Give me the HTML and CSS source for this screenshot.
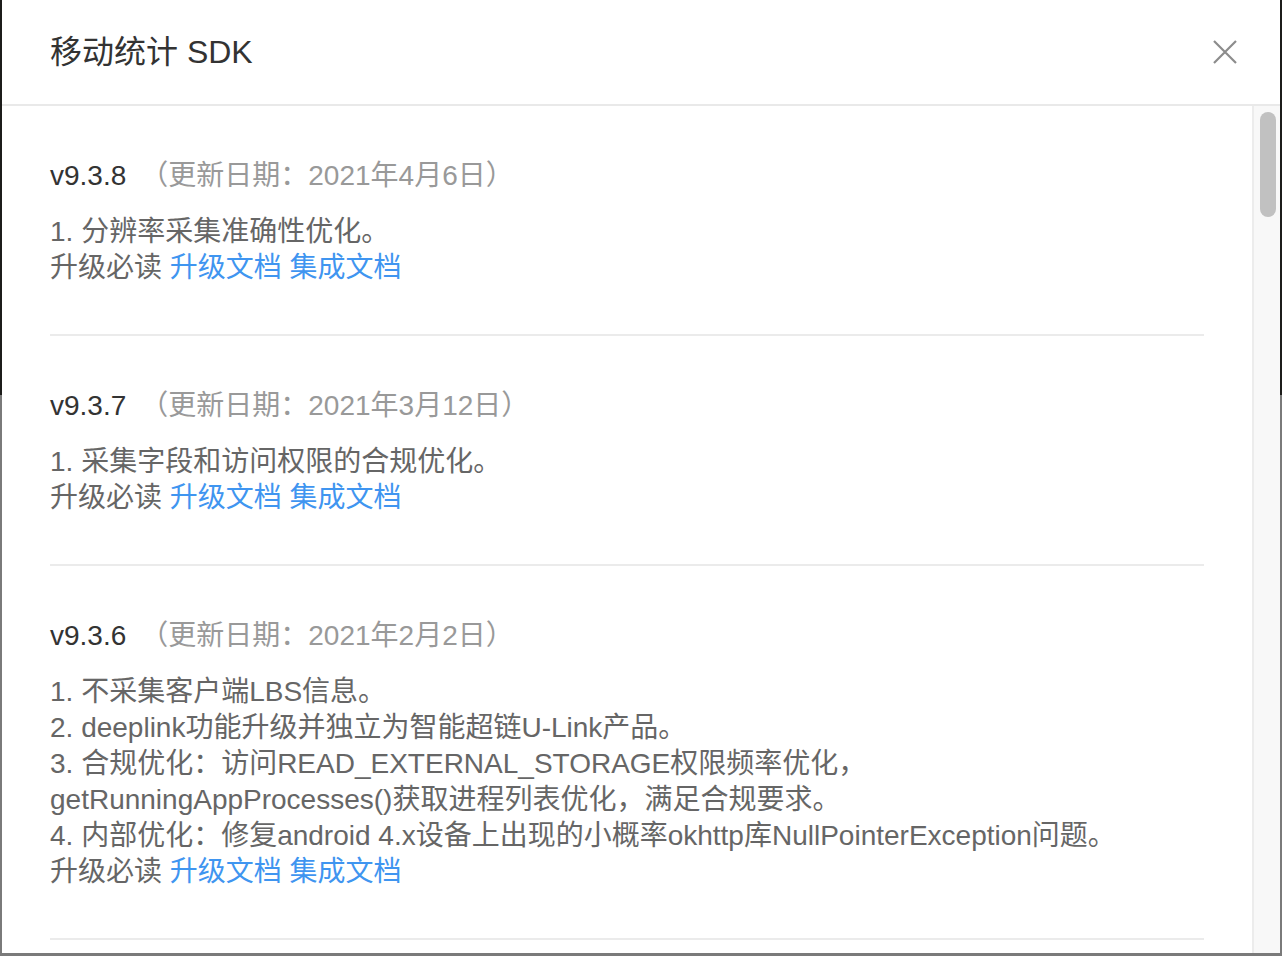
FILE: index.html
```html
<!DOCTYPE html>
<html lang="zh-CN">
<head>
  <meta charset="UTF-8">
  <meta name="viewport" content="width=device-width, initial-scale=1.0">
  <title>移动统计 SDK</title>
  <link rel="stylesheet" href="styles.css">
</head>
<body>
  <div class="modal">
    <header class="modal-header">
      <h2 class="modal-title">移动统计 SDK</h2>
      <button class="modal-close" type="button" aria-label="关闭">
        <svg width="24" height="24" viewBox="0 0 24 24">
          <path d="M1 1 L23 23 M23 1 L1 23" stroke="#8c8c8c" stroke-width="2.2" fill="none"/>
        </svg>
      </button>
    </header>

    <div class="modal-body">
      <div class="changelog">
        <section class="release">
          <h3 class="release-title">v9.3.8<span class="release-date">（更新日期：2021年4月6日）</span></h3>
          <p class="release-notes">
            1. 分辨率采集准确性优化。<br>
            升级必读 <a href="#">升级文档</a> <a href="#">集成文档</a>
          </p>
        </section>

        <section class="release">
          <h3 class="release-title">v9.3.7<span class="release-date">（更新日期：2021年3月12日）</span></h3>
          <p class="release-notes">
            1. 采集字段和访问权限的合规优化。<br>
            升级必读 <a href="#">升级文档</a> <a href="#">集成文档</a>
          </p>
        </section>

        <section class="release">
          <h3 class="release-title">v9.3.6<span class="release-date">（更新日期：2021年2月2日）</span></h3>
          <p class="release-notes">
            1. 不采集客户端LBS信息。<br>
            2. deeplink功能升级并独立为智能超链U-Link产品。<br>
            3. 合规优化：访问READ_EXTERNAL_STORAGE权限频率优化，<br>
            getRunningAppProcesses()获取进程列表优化，满足合规要求。<br>
            4. 内部优化：修复android 4.x设备上出现的小概率okhttp库NullPointerException问题。<br>
            升级必读 <a href="#">升级文档</a> <a href="#">集成文档</a>
          </p>
        </section>
      </div>

      <div class="scrollbar">
        <div class="scrollbar-thumb"></div>
      </div>
    </div>
  </div>
</body>
</html>
```

FILE: styles.css
```css
html, body {
  margin: 0;
  padding: 0;
  height: 956px;
  overflow: hidden;
}

body {
  font-family: "Liberation Sans", "Noto Sans CJK SC", sans-serif;
  background: linear-gradient(to bottom, #1c1c1a 0, #1c1c1a 395px, #7a7a7a 395px, #7a7a7a 100%);
}

.modal {
  width: 1278px;
  height: 953px;
  margin-left: 2px;
  background-color: white;
  display: flex;
  flex-direction: column;
}

.modal-header {
  height: 104px;
  flex-shrink: 0;
  display: flex;
  align-items: center;
  justify-content: space-between;
  padding: 0 43px 0 48px;
  border-bottom: 2px solid #e9e9e9;
}

.modal-title {
  margin: 0;
  font-size: 32px;
  font-weight: normal;
  line-height: 40px;
  color: #333;
}

.modal-close {
  border: none;
  background: none;
  padding: 0;
  width: 24px;
  height: 24px;
  cursor: pointer;
}

.modal-close svg {
  display: block;
}

.modal-body {
  flex: 1;
  min-height: 0;
  display: flex;
}

.changelog {
  flex: 1;
  overflow: hidden;
  padding: 0 48px;
}

.release {
  padding: 52px 0 48px;
  border-bottom: 2px solid #ebebeb;
}

.release-title {
  margin: 0 0 20px;
  font-size: 28px;
  font-weight: normal;
  line-height: 36px;
  color: #333;
}

.release-date {
  margin-left: 14px;
  color: #999;
}

.release-notes {
  margin: 0;
  font-size: 28px;
  line-height: 36px;
  color: #666;
}

.release-notes a {
  color: #3f95f0;
  text-decoration: none;
}

.scrollbar {
  width: 16px;
  flex-shrink: 0;
  padding: 6px 4px 0 6px;
  background-color: #f8f8f8;
  border-left: 2px solid #ececec;
}

.scrollbar-thumb {
  width: 16px;
  height: 105px;
  border-radius: 8px;
  background-color: #c1c1c1;
}
```
